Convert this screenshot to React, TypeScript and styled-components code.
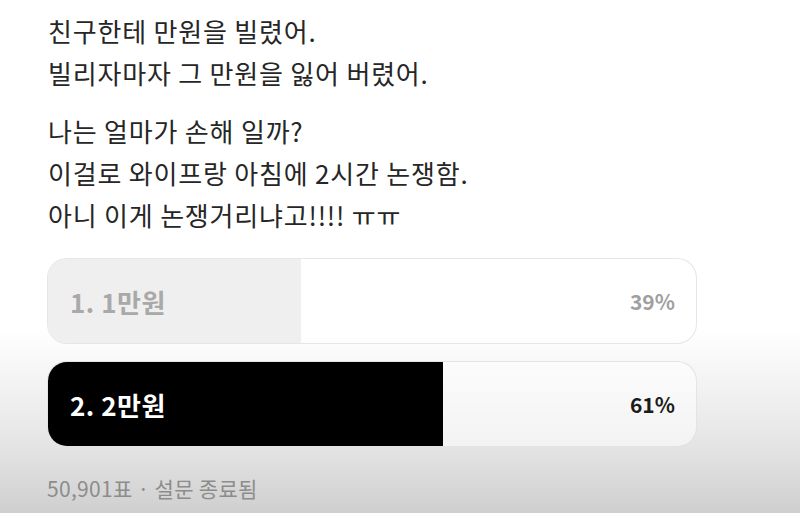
import React from "react";
import styled, { createGlobalStyle } from "styled-components";

const Global = createGlobalStyle`
  html, body { margin: 0; padding: 0; }
  body {
    width: 800px;
    height: 513px;
    overflow: hidden;
    background: linear-gradient(to bottom, #ffffff 0px, #ffffff 330px, #e6e6e6 440px, #cfcfcf 513px);
    font-family: "Noto Sans CJK KR", "Noto Sans", sans-serif;
  }
`;

const Page = styled.div`
  box-sizing: border-box;
  width: 800px;
  height: 513px;
  padding: 10px 103px 0 47px;
  display: flex;
  flex-direction: column;
`;

const Paragraph = styled.p<{ $gap?: number }>`
  margin: 0 0 ${(p) => p.$gap ?? 0}px 1px;
  font-size: 26px;
  line-height: 42px;
  color: #262626;
  letter-spacing: 0.8px;
`;

const Poll = styled.div`
  display: flex;
  flex-direction: column;
  gap: 17px;
`;

const Option = styled.div`
  position: relative;
  box-sizing: border-box;
  height: 86px;
  border: 1px solid rgba(220, 220, 220, 0.7);
  border-radius: 20px;
  background: rgba(255, 255, 255, 0.55);
  overflow: hidden;
  display: flex;
  align-items: center;
  justify-content: space-between;
  padding: 0 21px 0 22px;
`;

const Fill = styled.div<{ $win: boolean }>`
  position: absolute;
  left: 0;
  top: 0;
  bottom: 0;
  background: ${(p) => (p.$win ? "#000000" : "#efefef")};
`;

const Label = styled.span<{ $win: boolean }>`
  position: relative;
  font-size: 26px;
  font-weight: 700;
  letter-spacing: 0.5px;
  color: ${(p) => (p.$win ? "#ffffff" : "#a9a9a9")};
`;

const Pct = styled.span<{ $win: boolean }>`
  position: relative;
  font-size: 21px;
  font-weight: 700;
  color: ${(p) => (p.$win ? "#1c1c1c" : "#a0a0a0")};
`;

const Footer = styled.div`
  margin-top: 28px;
  font-size: 21px;
  line-height: 26px;
  letter-spacing: 0.3px;
  color: #8c8c8c;
`;

const options = [
  { label: "1. 1만원", pct: 39, win: false },
  { label: "2. 2만원", pct: 61, win: true },
];

export default function App() {
  return (
    <>
      <Global />
      <Page>
        <Paragraph $gap={16}>
          친구한테 만원을 빌렸어.
          <br />
          빌리자마자 그 만원을 잃어 버렸어.
        </Paragraph>
        <Paragraph $gap={22}>
          나는 얼마가 손해 일까?
          <br />
          이걸로 와이프랑 아침에 2시간 논쟁함.
          <br />
          아니 이게 논쟁거리냐고!!!! ㅠㅠ
        </Paragraph>
        <Poll>
          {options.map((o) => (
            <Option key={o.label}>
              <Fill $win={o.win} style={{ width: `${o.pct}%` }} />
              <Label $win={o.win}>{o.label}</Label>
              <Pct $win={o.win}>{o.pct}%</Pct>
            </Option>
          ))}
        </Poll>
        <Footer>50,901표 · 설문 종료됨</Footer>
      </Page>
    </>
  );
}
